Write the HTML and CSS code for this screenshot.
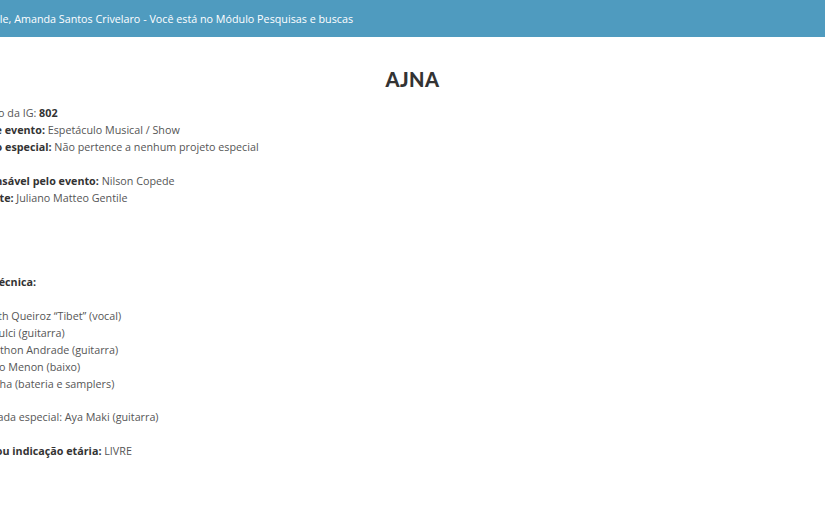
FILE: index.html
```html
<!DOCTYPE html>
<html lang="pt-BR">
<head>
<meta charset="utf-8">
<title>AJNA</title>
<link rel="stylesheet" href="styles.css">
</head>
<body>
<header class="topbar">
  <p class="welcome">Olá, Gabrielle, Amanda Santos Crivelaro - Você está no Módulo Pesquisas e buscas</p>
</header>
<main class="content">
  <h1 class="title">AJNA</h1>
  <div class="info">
    <p>Número da IG: <b>802</b></p>
    <p><b>Tipo de evento:</b> Espetáculo Musical / Show</p>
    <p><b>Projeto especial:</b> Não pertence a nenhum projeto especial</p>
    <p class="blank">&nbsp;</p>
    <p><b>Responsável pelo evento:</b> Nilson Copede</p>
    <p><b>Suplente:</b> Juliano Matteo Gentile</p>
    <p class="blank">&nbsp;</p>
    <p class="blank">&nbsp;</p>
    <p class="blank">&nbsp;</p>
    <p class="blank">&nbsp;</p>
    <p><b>Ficha técnica:</b></p>
    <p class="blank">&nbsp;</p>
    <p>Elisabeth Queiroz “Tibet” (vocal)</p>
    <p>Fábio Fulci (guitarra)</p>
    <p>Ian Welthon Andrade (guitarra)</p>
    <p>Eduardo Menon (baixo)</p>
    <p>Alê Rocha (bateria e samplers)</p>
    <p class="blank">&nbsp;</p>
    <p>Convidada especial: Aya Maki (guitarra)</p>
    <p class="blank">&nbsp;</p>
    <p><b>Idade ou indicação etária:</b> LIVRE</p>
  </div>
</main>
</body>
</html>
```
FILE: styles.css
```css
html, body {
  margin: 0;
  padding: 0;
  overflow: hidden;
  background: #ffffff;
}
body {
  font-family: "Open Sans", "Liberation Sans", sans-serif;
  font-size: 10.75px;
  color: #555555;
  width: 825px;
  height: 510px;
}
.topbar {
  background: #4f9bbf;
  height: 37px;
  display: flex;
  align-items: center;
  overflow: hidden;
}
.welcome {
  margin: 0 0 0 -59px;
  color: #ffffff;
  white-space: nowrap;
}
.content {
  padding-top: 29px;
}
.title {
  margin: 0 0 13px;
  text-align: center;
  font-family: "Lato", "DejaVu Sans", sans-serif;
  font-weight: 900;
  font-size: 20px;
  letter-spacing: 0.5px;
  color: #333333;
  line-height: 26px;
}
.info {
  margin-left: -37px;
  white-space: nowrap;
}
.info p {
  margin: 0;
  line-height: 16.9px;
}
.info b {
  color: #333333;
  font-weight: 700;
}
```
